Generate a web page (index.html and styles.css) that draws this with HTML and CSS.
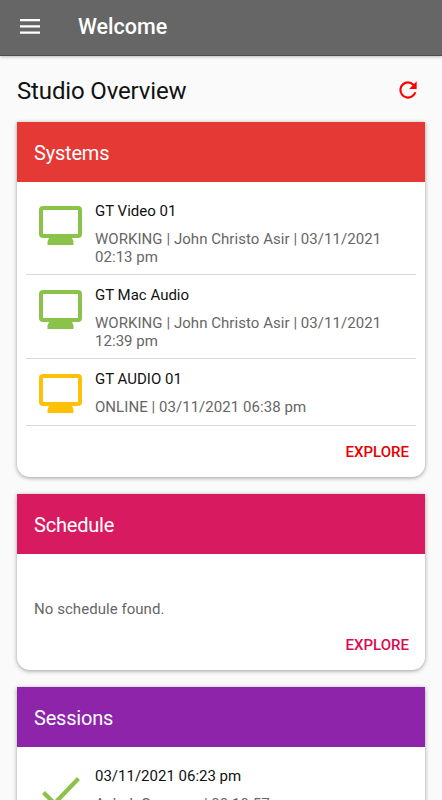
FILE: index.html
```html
<!DOCTYPE html>
<html lang="en">
<head>
  <meta charset="UTF-8">
  <meta name="viewport" content="width=device-width, initial-scale=1">
  <title>Welcome</title>
  <link rel="stylesheet" href="styles.css">
</head>
<body>
  <header class="toolbar">
    <button class="icon-btn" aria-label="Menu">
      <svg class="menu-icon" viewBox="0 0 20 15"><path d="M0 0h20v2.3H0zM0 6.2h20v2.3H0zM0 12.4h20v2.3H0z" fill="#fff"/></svg>
    </button>
    <h1>Welcome</h1>
  </header>

  <main>
    <div class="overview">
      <h2>Studio Overview</h2>
      <button class="icon-btn" aria-label="Refresh">
        <svg class="refresh-icon" viewBox="0 0 24 24"><path d="M17.65 6.35A7.96 7.96 0 0 0 12 4a8 8 0 1 0 7.73 10h-2.08A6 6 0 1 1 12 6c1.66 0 3.14.69 4.22 1.78L13 11h7V4z" fill="#f00"/></svg>
      </button>
    </div>

    <section class="card systems">
      <h3>Systems</h3>
      <ul class="list">
        <li>
          <svg class="monitor working" viewBox="0 0 43 39"><path fill-rule="evenodd" d="M4 0h35a4 4 0 0 1 4 4v24a4 4 0 0 1-4 4h-6l1.500 3.500V39h-26v-3.500L10 32H4a4 4 0 0 1-4-4V4a4 4 0 0 1 4-4zM4 4v24h35V4z"/></svg>
          <div class="info">
            <p class="name">GT Video 01</p>
            <p class="detail">WORKING | John Christo Asir | 03/11/2021 02:13 pm</p>
          </div>
        </li>
        <li>
          <svg class="monitor working" viewBox="0 0 43 39"><path fill-rule="evenodd" d="M4 0h35a4 4 0 0 1 4 4v24a4 4 0 0 1-4 4h-6l1.500 3.500V39h-26v-3.500L10 32H4a4 4 0 0 1-4-4V4a4 4 0 0 1 4-4zM4 4v24h35V4z"/></svg>
          <div class="info">
            <p class="name">GT Mac Audio</p>
            <p class="detail">WORKING | John Christo Asir | 03/11/2021 12:39 pm</p>
          </div>
        </li>
        <li>
          <svg class="monitor online" viewBox="0 0 43 39"><path fill-rule="evenodd" d="M4 0h35a4 4 0 0 1 4 4v24a4 4 0 0 1-4 4h-6l1.500 3.500V39h-26v-3.500L10 32H4a4 4 0 0 1-4-4V4a4 4 0 0 1 4-4zM4 4v24h35V4z"/></svg>
          <div class="info">
            <p class="name">GT AUDIO 01</p>
            <p class="detail">ONLINE | 03/11/2021 06:38 pm</p>
          </div>
        </li>
      </ul>
      <button class="explore">EXPLORE</button>
    </section>

    <section class="card schedule">
      <h3>Schedule</h3>
      <p class="empty">No schedule found.</p>
      <button class="explore">EXPLORE</button>
    </section>

    <section class="card sessions">
      <h3>Sessions</h3>
      <ul class="list">
        <li>
          <svg class="check" viewBox="0 0 38 28"><path d="M1.500 15.500l11 11L36.500 1.500" fill="none" stroke="#8bc34a" stroke-width="4.300"/></svg>
          <div class="info">
            <p class="name">03/11/2021 06:23 pm</p>
            <p class="detail">Ashok Ganesan | 00:10:57</p>
          </div>
        </li>
      </ul>
    </section>
  </main>
</body>
</html>
```

FILE: styles.css
```css
* {
  box-sizing: border-box;
  margin: 0;
  padding: 0;
}

body {
  background: #fafafa;
  font-family: Roboto, sans-serif;
  font-size: 15px;
  color: #111;
  height: 100vh;
  overflow: hidden;
}

button {
  background: none;
  border: none;
  font-family: inherit;
  cursor: pointer;
}

.toolbar {
  display: flex;
  align-items: center;
  height: 56px;
  padding: 0 20px 3px;
  background: #666;
  color: white;
  border-bottom: 1px solid #4c4c4c;
  box-shadow: 0 1px 3px rgba(0, 0, 0, 0.25);
}

.toolbar h1 {
  margin-left: 38px;
  padding-top: 1px;
  font-size: 21.5px;
  font-weight: 500;
  letter-spacing: 0;
}

.icon-btn svg {
  display: block;
}

.menu-icon {
  width: 20px;
  height: 15px;
}

.overview {
  display: flex;
  justify-content: space-between;
  align-items: center;
  height: 66px;
  padding: 2px 21px 0 17px;
}

.overview h2 {
  padding-top: 1px;
  font-size: 24px;
  font-weight: 400;
  letter-spacing: -0.15px;
}

.refresh-icon {
  width: 26px;
  height: 26px;
}

.card {
  display: flex;
  flex-direction: column;
  margin: 0 17px 17px;
  background: white;
  border-radius: 0 0 13px 13px;
  box-shadow: 0 1px 4px rgba(0, 0, 0, 0.38);
}

.card h3 {
  height: 60px;
  padding: 1px 17px 0;
  font-size: 20px;
  font-weight: 400;
  letter-spacing: -0.2px;
  line-height: 61px;
  color: white;
}

.systems {
  height: 355px;
}

.systems h3 {
  background: #e53935;
}

.schedule {
  height: 176px;
}

.schedule h3 {
  background: #d81b60;
}

.sessions h3 {
  background: #8e24aa;
}

.list {
  list-style: none;
  padding: 9px 9px 0;
}

.list li {
  display: flex;
  min-height: 67px;
  padding: 11px 12px 8px 13px;
  border-bottom: 1px solid #d8d8d8;
}

.monitor {
  flex: none;
  width: 43px;
  height: 39px;
  margin-top: 4px;
}

.working {
  fill: #8bc34a;
}

.online {
  fill: #ffc107;
}

.info {
  margin-left: 13px;
}

.name {
  line-height: 18px;
}

.detail {
  margin-top: 11px;
  line-height: 17.5px;
  letter-spacing: 0.05px;
  color: #666;
}

.empty {
  padding: 46px 17px 0;
  line-height: 18px;
  letter-spacing: 0.05px;
  color: #666;
}

.explore {
  align-self: flex-end;
  margin-top: auto;
  padding: 0 16px 16px;
  font-size: 15px;
  font-weight: 500;
  line-height: 18px;
  color: #e60000;
}

.schedule .explore {
  color: #d80b50;
}

.check {
  flex: none;
  width: 38px;
  height: 28px;
  margin: 10px 2px 0 3px;
}
```
